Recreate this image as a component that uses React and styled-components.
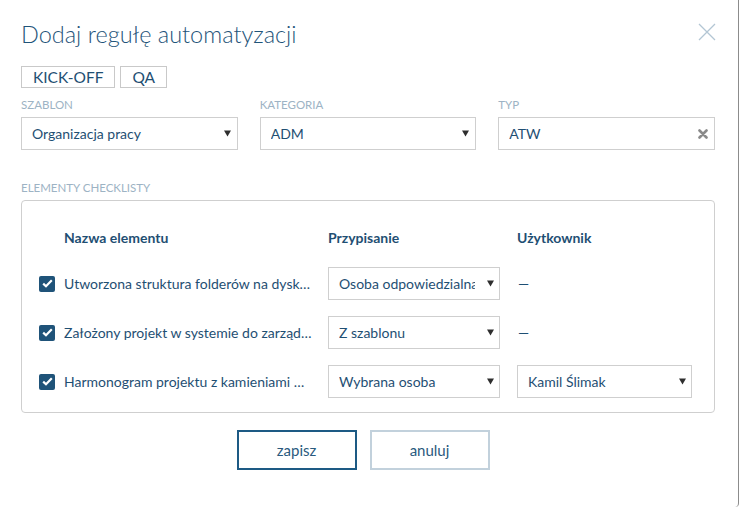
import React from "react";
import styled, { createGlobalStyle } from "styled-components";

const GlobalStyle = createGlobalStyle`
  html, body {
    margin: 0;
    background: #ffffff;
  }
  body {
    font-family: Lato, "Open Sans", "Liberation Sans", sans-serif;
    color: #1f4f73;
  }
`;

const rows = [
  { name: "Utworzona struktura folderów na dysku sieciowym projektu", assign: "Osoba odpowiedzialna", user: null },
  { name: "Założony projekt w systemie do zarządzania zadaniami", assign: "Z szablonu", user: null },
  { name: "Harmonogram projektu z kamieniami milowymi", assign: "Wybrana osoba", user: "Kamil Ślimak" },
];

const Caret = () => (
  <svg width="7" height="7" viewBox="0 0 7 7">
    <path d="M0 0.5 L7 0.5 L3.5 6.5 Z" fill="#2e2e2e" />
  </svg>
);

const App = () => {
  return (
    <>
      <GlobalStyle />
      <Modal>
        <Header>
          <Title>Dodaj regułę automatyzacji</Title>
          <CloseButton>
            <svg width="18" height="18" viewBox="0 0 18 18">
              <path d="M1 1 L17 17 M17 1 L1 17" stroke="#b3c6d4" strokeWidth="1.3" fill="none" />
            </svg>
          </CloseButton>
        </Header>

        <Tags>
          <Tag>KICK-OFF</Tag>
          <Tag>QA</Tag>
        </Tags>

        <Fields>
          <Field>
            <Label>Szablon</Label>
            <Select>
              <SelectText>Organizacja pracy</SelectText>
              <Caret />
            </Select>
          </Field>
          <Field>
            <Label>Kategoria</Label>
            <Select>
              <SelectText>ADM</SelectText>
              <Caret />
            </Select>
          </Field>
          <Field>
            <Label>Typ</Label>
            <Select>
              <SelectText>ATW</SelectText>
              <svg width="10" height="10" viewBox="0 0 10 10">
                <path d="M1.5 1.5 L8.5 8.5 M8.5 1.5 L1.5 8.5" stroke="#8a8a8a" strokeWidth="2.6" strokeLinecap="round" />
              </svg>
            </Select>
          </Field>
        </Fields>

        <SectionLabel>Elementy checklisty</SectionLabel>
        <Panel>
          <Grid>
            <span />
            <ColHead>Nazwa elementu</ColHead>
            <ColHead>Przypisanie</ColHead>
            <ColHead>Użytkownik</ColHead>
          </Grid>
          {rows.map((row) => (
            <Grid key={row.name}>
              <Check>
                <svg width="11" height="9" viewBox="0 0 11 9">
                  <path d="M1.2 4.6 L4 7.3 L9.8 1.3" stroke="#fff" strokeWidth="2.2" fill="none" />
                </svg>
              </Check>
              <ItemName>{row.name}</ItemName>
              <Select $width="172px" $small>
                <SelectText>{row.assign}</SelectText>
                <Caret />
              </Select>
              {row.user ? (
                <Select $width="175px" $small>
                  <SelectText>{row.user}</SelectText>
                  <Caret />
                </Select>
              ) : (
                <Dash>—</Dash>
              )}
            </Grid>
          ))}
        </Panel>

        <Actions>
          <Button $primary>zapisz</Button>
          <Button>anuluj</Button>
        </Actions>
      </Modal>
    </>
  );
};

const Modal = styled.div`
  width: 739px;
  height: 507px;
  box-sizing: border-box;
  padding: 20px 23px 0 21px;
  border-right: 1px solid #8c8c8c;
  border-bottom-right-radius: 4px;
`;

const Header = styled.div`
  display: flex;
  justify-content: space-between;
  align-items: flex-start;
  height: 28px;
`;

const Title = styled.h1`
  margin: 0;
  font-size: 23.5px;
  font-weight: 300;
  line-height: 28px;
  color: #1f5479;
`;

const CloseButton = styled.div`
  display: flex;
  margin: 3px -1px 0 0;
`;

const Tags = styled.div`
  display: flex;
  gap: 5px;
  margin-top: 18px;
`;

const Tag = styled.span`
  display: inline-flex;
  align-items: center;
  height: 22px;
  box-sizing: border-box;
  padding: 0 11px;
  border: 1px solid #c9c9c9;
  font-size: 15.5px;
  color: #1f4f73;
`;

const Fields = styled.div`
  display: grid;
  grid-template-columns: repeat(3, 1fr);
  column-gap: 22px;
  margin-top: 10px;
`;

const Field = styled.div`
  display: flex;
  flex-direction: column;
`;

const Label = styled.div`
  font-size: 11.5px;
  line-height: 14px;
  text-transform: uppercase;
  color: #9db3c4;
  margin-bottom: 5px;
`;

const Select = styled.div`
  display: flex;
  align-items: center;
  justify-content: space-between;
  width: ${(p) => p.$width || "auto"};
  height: 33px;
  box-sizing: border-box;
  padding: 0 ${(p) => (p.$small ? "5px" : "6px")} 0 10px;
  border: 1px solid #cfcfcf;
  font-size: 14px;
  color: #1f4f73;
  gap: 12px;
`;

const SelectText = styled.span`
  white-space: nowrap;
  overflow: hidden;
  flex: 1;
`;

const SectionLabel = styled(Label)`
  margin-top: 31px;
  margin-bottom: 5px;
`;

const Panel = styled.div`
  border: 1px solid #cfcfcf;
  border-radius: 4px;
  padding: 27px 0 14px 17px;
  display: flex;
  flex-direction: column;
  gap: 16px;
`;

const Grid = styled.div`
  display: grid;
  grid-template-columns: 25px 264px 189px 175px;
  align-items: center;
`;

const ColHead = styled.div`
  font-size: 14px;
  font-weight: 700;
  line-height: 20px;
  color: #1f4f73;
  margin-bottom: 3px;
`;

const Check = styled.span`
  width: 16px;
  height: 16px;
  border-radius: 2px;
  background: #1f5379;
  display: flex;
  align-items: center;
  justify-content: center;
`;

const ItemName = styled.span`
  font-size: 14px;
  color: #1f4f73;
  white-space: nowrap;
  overflow: hidden;
  text-overflow: ellipsis;
  max-width: 250px;
`;

const Dash = styled.span`
  font-size: 14px;
  color: #1f4f73;
  padding-left: 1px;
`;

const Actions = styled.div`
  display: flex;
  justify-content: center;
  gap: 13px;
  margin-top: 17px;
  padding-right: 10px;
`;

const Button = styled.button`
  width: 120px;
  height: 40px;
  background: #fff;
  border: 2px solid ${(p) => (p.$primary ? "#1d5a84" : "#c2d1dc")};
  font-family: inherit;
  font-size: 15px;
  color: #2a5a7e;
  cursor: pointer;
`;

export default App;
